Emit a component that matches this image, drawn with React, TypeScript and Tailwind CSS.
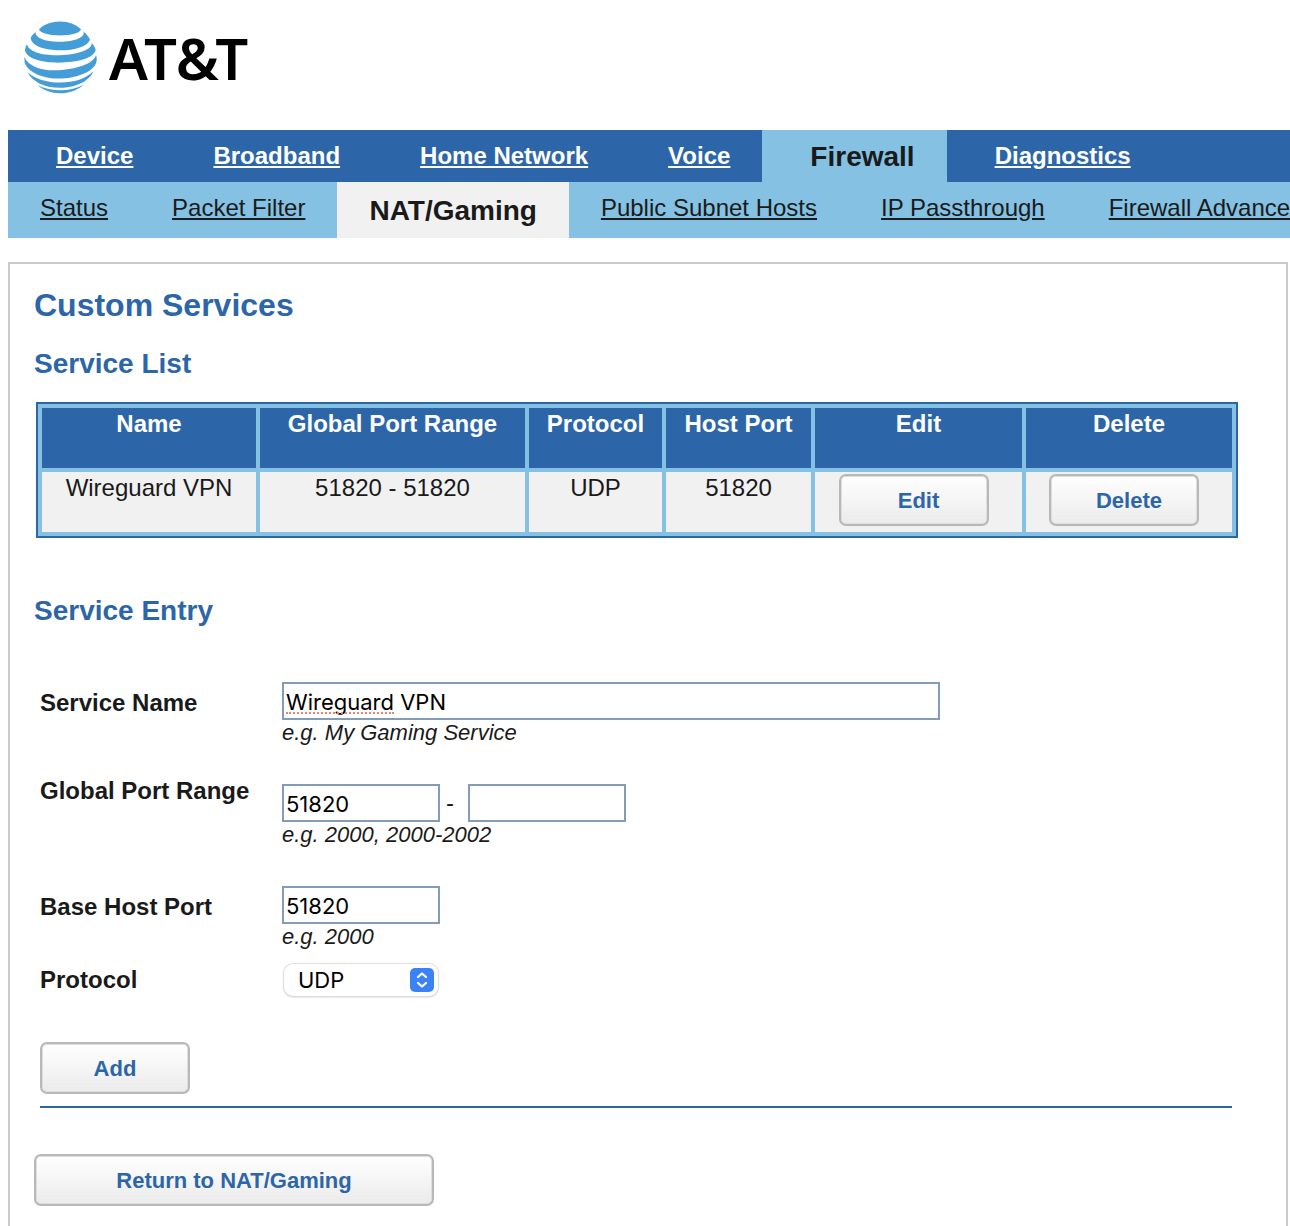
import React from "react";

const primaryTabs = ["Device", "Broadband", "Home Network", "Voice", "Firewall", "Diagnostics"];
const secondaryTabs = [
  "Status",
  "Packet Filter",
  "NAT/Gaming",
  "Public Subnet Hosts",
  "IP Passthrough",
  "Firewall Advanced",
];
const columns = [
  { label: "Name", width: "w-[214px]" },
  { label: "Global Port Range", width: "w-[265px]" },
  { label: "Protocol", width: "w-[133px]" },
  { label: "Host Port", width: "w-[145px]" },
  { label: "Edit", width: "w-[207px]" },
  { label: "Delete", width: "w-[206px]" },
];

function Logo() {
  return (
    <a href="#home" aria-label="AT&amp;T" className="flex h-[73px] items-center gap-3">
      <svg viewBox="72 65 220 219" className="h-[73px] w-[73px]" fill="#459dd7" aria-hidden="true">
        <path d="M117 90C130 75 156 66 181 66C206 66 229 75 244 90C239 101 214 108 181 108C148 108 122 101 117 90Z" />
        <path d="M107 98C105 117 138 128 181 127C224 126 258 114 251 96C260 103 267 112 271 121C264 141 226 153 181 153C135 153 96 141 92 116C95 109 101 103 107 98Z" />
        <path d="M81 134C84 156 124 168 170 168C222 168 278 154 276 131C283 138 287 146 288 153C280 178 232 190 176 190C122 190 77 176 75 152C76 145 78 139 81 134Z" />
        <path d="M73 172C84 200 124 214 166 213C222 212 284 194 289 166C292 176 292 184 289 192C278 220 226 238 178 238C126 238 84 218 74 190Z" />
        <path d="M83 219C106 240 140 250 181 250C222 250 260 238 281 216C273 238 240 265 181 266C132 266 96 246 83 219Z" />
        <path d="M113 258C134 268 158 273 181 273C204 273 230 268 251 257C232 273 208 282 181 282C154 282 130 273 113 258Z" />
      </svg>
      <span className="font-['Noto_Sans',sans-serif] text-[58px] leading-none font-semibold text-black">AT&amp;T</span>
    </a>
  );
}

function PushButton({ children, size }: { children: React.ReactNode; size: string }) {
  return (
    <button
      type="button"
      className={
        "h-[52px] rounded-[7px] border-2 border-[#b8b8b8] bg-linear-to-b from-white to-[#ebebeb] pt-[2px] text-[22px] font-bold text-[#2c66a9] shadow-[inset_0_0_0_1px_#dedede] " +
        size
      }
    >
      {children}
    </button>
  );
}

const inputClass =
  "h-[38px] border-2 border-[#839db9] bg-white px-[2px] pt-[2px] font-[Inter,sans-serif] text-[22px] text-black outline-none";
const hintClass = "text-[22px] leading-[26px] italic";

export default function App() {
  return (
    <div className="overflow-hidden bg-white pl-2 font-['Liberation_Sans',Arial,sans-serif] text-2xl text-[#1a1a1a]">
      <header className="h-[130px] pt-[21px] pl-4">
        <Logo />
      </header>

      <nav aria-label="Main" className="flex h-[52px] bg-[#2c66a9] font-bold whitespace-nowrap">
        {primaryTabs.map((tab) =>
          tab === "Firewall" ? (
            <span key={tab} className="bg-[#84c1e3] pt-[11px] pr-8 pl-12 text-[28px] leading-8">
              {tab}
            </span>
          ) : (
            <a key={tab} href="#tab" className="pt-[10px] pr-8 pl-12 leading-8 text-white underline">
              {tab}
            </a>
          )
        )}
      </nav>
      <nav aria-label="Firewall" className="flex h-14 bg-[#84c1e3] whitespace-nowrap">
        {secondaryTabs.map((tab) =>
          tab === "NAT/Gaming" ? (
            <span key={tab} className="bg-[#f1f1f1] px-8 pt-[13px] text-[28px] leading-8 font-bold">
              {tab}
            </span>
          ) : (
            <a key={tab} href="#subtab" className="px-8 pt-[10px] leading-8 underline">
              {tab}
            </a>
          )
        )}
      </nav>

      <main className="mt-6 mr-[2px] border-2 border-b-0 border-[#cbcbcb] px-6 pt-[22px] pb-5">
        <h1 className="text-[32px] leading-[38px] font-bold text-[#2c66a9]">Custom Services</h1>
        <h2 className="mt-6 text-[28px] leading-8 font-bold text-[#2c66a9]">Service List</h2>

        <div className="mt-[22px] mr-6 ml-[2px]">
          <table className="w-full table-fixed border-separate border-spacing-1 border-2 border-[#2c66a9] bg-[#84c1e3] text-center">
            <thead>
              <tr className="h-[60px] text-white">
                {columns.map((c) => (
                  <th key={c.label} scope="col" className={"bg-[#2c66a9] p-0 align-top leading-8 " + c.width}>
                    {c.label}
                  </th>
                ))}
              </tr>
            </thead>
            <tbody>
              <tr className="h-[60px] bg-[#f1f1f1]">
                <td className="p-0 align-top leading-8">Wireguard VPN</td>
                <td className="p-0 align-top leading-8">51820 - 51820</td>
                <td className="p-0 align-top leading-8">UDP</td>
                <td className="p-0 align-top leading-8">51820</td>
                <td className="p-0 pt-[2px] align-top">
                  <div className="flex justify-center pr-[10px]">
                    <PushButton size="w-[150px] pl-[10px]">Edit</PushButton>
                  </div>
                </td>
                <td className="p-0 pt-[2px] align-top">
                  <div className="flex justify-center pr-[10px]">
                    <PushButton size="w-[150px] pl-[10px]">Delete</PushButton>
                  </div>
                </td>
              </tr>
            </tbody>
          </table>
        </div>

        <h2 className="mt-[57px] text-[28px] leading-8 font-bold text-[#2c66a9]">Service Entry</h2>

        <form className="mt-[55px] mr-[30px] ml-[6px]" onSubmit={(e) => e.preventDefault()}>
          <div className="grid grid-cols-[242px_1fr]">
            <label htmlFor="service-name" className="pt-[5px] leading-8 font-bold">
              Service Name
            </label>
            <div className="flex h-[102px] flex-col items-start">
              <div className="relative">
                <input id="service-name" defaultValue="Wireguard VPN" spellCheck={false} className={inputClass + " w-[658px]"} />
                <span className="absolute bottom-[6px] left-1 w-[108px] border-b-2 border-dotted border-[#f08078]" />
              </div>
              <span className={hintClass}>e.g. My Gaming Service</span>
            </div>

            <label htmlFor="port-start" className="-mt-[9px] leading-8 font-bold">
              Global Port Range
            </label>
            <div className="h-[102px]">
              <div className="flex items-center">
                <input id="port-start" defaultValue="51820" className={inputClass + " w-[158px]"} />
                <span className="w-7 pl-[6px] leading-8">-</span>
                <input aria-label="Global port range end" className={inputClass + " w-[158px]"} />
              </div>
              <span className={hintClass + " block"}>e.g. 2000, 2000-2002</span>
            </div>

            <label htmlFor="host-port" className="pt-[5px] leading-8 font-bold">
              Base Host Port
            </label>
            <div className="flex h-[76px] flex-col items-start">
              <input id="host-port" defaultValue="51820" className={inputClass + " w-[158px]"} />
              <span className={hintClass}>e.g. 2000</span>
            </div>

            <label htmlFor="protocol" className="pt-[2px] leading-8 font-bold">
              Protocol
            </label>
            <div className="pt-[2px] pl-[2px]">
              <div className="relative w-[154px]">
                <select
                  id="protocol"
                  defaultValue="UDP"
                  className="block h-8 w-full appearance-none rounded-[9px] bg-white pl-[14px] font-[Inter,sans-serif] text-[22px] leading-8 text-black shadow-[0_0_1px_1px_#dedede,0_1px_2px_#bbbbbb]"
                >
                  <option>UDP</option>
                  <option>TCP</option>
                  <option>TCP/UDP</option>
                </select>
                <svg viewBox="0 0 24 24" className="pointer-events-none absolute top-1 right-1 h-6 w-6" aria-hidden="true">
                  <rect width="24" height="24" rx="5" fill="#3b82f7" />
                  <path d="M8 9l4-3.5 4 3.5M8 15l4 3.5 4-3.5" fill="none" stroke="#fff" strokeWidth="2.2" strokeLinecap="round" strokeLinejoin="round" />
                </svg>
              </div>
            </div>
          </div>

          <div className="mt-[46px] border-b-2 border-[#2c66a9] pb-3">
            <PushButton size="w-[150px] block">Add</PushButton>
          </div>
        </form>

        <div className="mt-[46px]">
          <PushButton size="w-[400px] block">Return to NAT/Gaming</PushButton>
        </div>
      </main>
    </div>
  );
}
